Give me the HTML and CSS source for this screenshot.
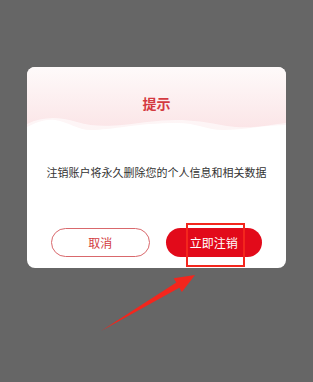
FILE: index.html
```
<!DOCTYPE html>
<html lang="zh-CN">
<head>
  <meta charset="UTF-8">
  <title>注销账户</title>
  <link rel="stylesheet" href="styles.css">
</head>
<body>

  <div class="dialog">
    <div class="dialog-head">
      <div class="dialog-title">提示</div>
      <svg class="wave" viewBox="0 0 259 18" preserveAspectRatio="none">
        <path d="M0 10 C15 3 30 2 50 8 C70 14 90 12 120 8 C150 4 170 6 200 12 C225 16 245 10 259 9 L259 18 L0 18 Z" fill="#fff" fill-opacity="0.6"/>
        <path d="M0 13 C10 8 18 5 28 6 C42 8 50 16 64 16 C85 16 110 9 150 9 C170 9 180 16 196 16 C215 16 240 11 259 11 L259 18 L0 18 Z" fill="#fff"/>
      </svg>
    </div>
    <div class="dialog-msg">注销账户将永久删除您的个人信息和相关数据</div>
    <div class="dialog-btns">
      <button class="btn btn-cancel">取消</button>
      <button class="btn btn-ok">立即注销</button>
    </div>
  </div>

  <!-- annotation drawn over the screenshot -->
  <svg class="mark" width="313" height="382" viewBox="0 0 313 382">
    <rect x="187" y="224" width="57" height="42" fill="none" stroke="#f3261d" stroke-width="2"/>
    <polygon points="101,331 179.3,287.8 181.9,292.1 195,275 173.7,278.3 176.3,282.6" fill="#f3261d"/>
  </svg>

</body>
</html>
```

FILE: styles.css
```
body { margin: 0; height: 382px; background: #666; font-family: "Noto Sans CJK SC", "Noto Sans", sans-serif; position: relative; overflow: hidden; }
.dialog { width: 259px; margin: 67px auto 0; height: 201px; background: #fff; border-radius: 8px; overflow: hidden; }
.dialog-head { background: linear-gradient(#fefafa, #fbe4e6); padding-top: 26px; }
.dialog-title { text-align: center; font-size: 14px; line-height: 20px; font-weight: bold; color: #d43a41; }
.wave { display: block; width: 100%; height: 18px; margin-top: 1px; }
.dialog-msg { margin-top: 32px; text-align: center; font-size: 11px; line-height: 16px; color: #333; }
.dialog-btns { display: flex; gap: 16px; padding: 0 24px; margin-top: 48px; }
.btn { flex: 1; height: 29px; border-radius: 15px; font-family: inherit; font-size: 12px; padding: 0; }
.btn-cancel { background: #fff; border: 1px solid #d9686c; color: #d23c42; }
.btn-ok { background: #e20a1a; border: none; color: #fff; }
.mark { position: absolute; left: 0; top: 0; }
```
